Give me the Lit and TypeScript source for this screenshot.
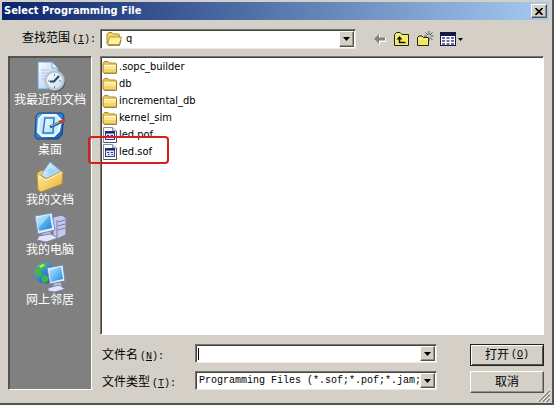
import { LitElement, html, css, svg } from "lit";
import { customElement, state } from "lit/decorators.js";

const folderIcon = html`<svg class="icon16" viewBox="0 0 16 16" aria-hidden="true">
  <path d="M1 4.5 2.5 2.5H6L7.5 4H13.5L14.5 5V13L13.5 14H2L1 13Z" fill="#e8c557" stroke="#b18a2c" />
  <path d="M2 6.5H14V13H2Z" fill="#fbe894" />
  <path d="M2 10H14V13.2H2Z" fill="#f3d56c" />
  <path d="M2 6.5H14" stroke="#fffbd0" />
  <path d="M2 14.5H14.5V6" fill="none" stroke="#8d7331" stroke-width=".8" />
</svg>`;

const openFolderIcon = html`<svg class="icon16" viewBox="0 0 16 16" aria-hidden="true">
  <path d="M1 13V3L2.5 1.5H6L7.5 3H12.5L13.5 4V13Z" fill="#f3d668" stroke="#b18a2c" />
  <path d="M3.5 6H15.5L13.5 13.5H1.5Z" fill="#fff09c" stroke="#b99735" />
  <path d="M2 14.5H13.5L15 9" fill="none" stroke="#897036" stroke-width=".8" />
</svg>`;

const fileIcon = html`<svg class="icon16" viewBox="0 0 16 16" aria-hidden="true">
  <path d="M1.5.5H10.500L14.500 4V15.5H1.5Z" fill="#fff" stroke="#8b8b98" />
  <path d="M10.500.5V4H14.500" fill="#ddd" stroke="#8b8b98" />
  <path d="M14.500 4V15.5H1.5" fill="none" stroke="#55555f" />
  <rect x="3.500" y="4.500" width="9" height="8" fill="#e6ebfb" stroke="#2c3a94" />
  <path d="M3 5.500H13" stroke="#15237f" stroke-width="2" />
  <path d="M5 8.500H7M8.500 8.500H11M6 10.500H7.500M9.500 10.500H11" stroke="#26338a" />
</svg>`;

const defs = (id: string, a: string, b: string) => svg`<linearGradient id=${id} x1="0" y1="0" x2="1" y2="1">
  <stop offset="0" stop-color=${a} /><stop offset="1" stop-color=${b} /></linearGradient>`;

const recentIcon = html`<svg class="icon32" viewBox="0 0 32 32" aria-hidden="true">
  <defs>${defs("page", "#ffffff", "#9cc4ee")}${defs("dial", "#ffffff", "#c6dff2")}</defs>
  <path d="M4 1H18L24 7V28H4Z" fill="url(#page)" stroke="#6d9bd0" />
  <path d="M18 1V7H24Z" fill="#e9f3ff" stroke="#7ea6d4" />
  <path d="M7 9H15M7 12H14M7 15H12M7 18H11" stroke="#accbed" />
  <ellipse cx="21.500" cy="21" rx="10" ry="10" fill="#53606c" />
  <circle cx="20.500" cy="19.500" r="9" fill="url(#dial)" stroke="#b9c6d0" stroke-width="2.500" />
  <path d="M20.500 13V15M20.500 25V27M14 20H16M25 20H27" stroke="#5a87aa" />
  <path d="M25 15 20 20.500H16" fill="none" stroke="#29455e" stroke-width="2" />
</svg>`;

const desktopIcon = html`<svg class="icon32" viewBox="0 0 32 32" aria-hidden="true">
  <defs>${defs("desk", "#57aaf0", "#0c55b5")}${defs("pad", "#ffffff", "#a8d8f9")}</defs>
  <path d="M5 2H28L30 5 28 24 24 28H3L1 25 2 5Z" fill="url(#desk)" stroke="#0a438d" />
  <path d="M9 4H22L27 9 25 20 20 25H8L4 21 5 8Z" fill="#c9e8fc" stroke="#f2fbff" stroke-width="2" />
  <path d="M11 7H20L19 22H9Z" fill="url(#pad)" stroke="#2a7bcc" stroke-width="1.500" />
  <path d="M16 16 26 11.500" stroke="#2b5686" stroke-width="3" />
  <path d="M17 15 26 11" stroke="#7dbbe8" stroke-width="1.200" />
  <path d="M25 11.500 31 9" stroke="#c5402e" stroke-width="3" />
</svg>`;

const documentsIcon = html`<svg class="icon32" viewBox="0 0 32 32" aria-hidden="true">
  <defs>${defs("fold", "#fff3a0", "#e9ae31")}${defs("sheet", "#eaf8ff", "#78b9e8")}</defs>
  <path d="M3 12 8 9 12 12V27L5 30Z" fill="#f5cf58" stroke="#b6862a" />
  <path d="M16 1 28 11 21 24 7 14Z" fill="url(#sheet)" stroke="#7eb0d7" />
  <path d="M13 10 17 7 22 11 19 16Z" fill="#a2d4f4" />
  <path d="M3 13 12 18 29 10 28 23 7 31 4 29Z" fill="url(#fold)" stroke="#bd8b28" />
  <path d="M4 14 12 19 28 11" fill="none" stroke="#fffbd4" />
</svg>`;

const computerIcon = html`<svg class="icon32" viewBox="0 0 32 32" aria-hidden="true">
  <defs>${defs("screen", "#9be0ff", "#167bdc")}</defs>
  <path d="M19 6 28 4 32 7V24L23 28 19 25Z" fill="#c7c8e9" stroke="#7173a7" />
  <path d="M23 9V27M24 11 31 9M24 15 31 13M24 19 31 17" stroke="#7779b2" />
  <path d="M9 20H16L18 26H8Z" fill="#b6b9dc" />
  <path d="M5 25 17 23 24 27 12 31 3 29Z" fill="#e4e5f7" stroke="#8587b7" />
  <path d="M1 5 18 2 21 19 4 23Z" fill="#e4edfb" stroke="#7990bd" />
  <path d="M3 7 16 4 18 17 5 20Z" fill="url(#screen)" />
  <path d="M3 7 16 4 5 16Z" fill="#b9ecff" opacity=".6" />
</svg>`;

const networkIcon = html`<svg class="icon32" viewBox="0 0 32 32" aria-hidden="true">
  <defs>${defs("globe", "#52b7ff", "#094fae")}${defs("screen2", "#b2eaff", "#2289df")}</defs>
  <circle cx="11" cy="12" r="10.500" fill="url(#globe)" />
  <path d="M3 6 9 2 14 3 11 7 7 10 8 15 4 16 1 11ZM10 14 15 16 13 21 9 22 7 17Z" fill="#42b741" />
  <path d="M5 5 9 3 11 4 7 7Z" fill="#b1ed84" />
  <path d="M20 22H27L28 27H19Z" fill="#babfe3" />
  <path d="M14 27 25 24 31 28 21 31 14 30Z" fill="#e3e5f7" stroke="#7f83b4" />
  <path d="M13 7 29 4 31 20 16 23Z" fill="#e7effb" stroke="#7087b5" />
  <path d="M15 9 27 6 29 18 17 21Z" fill="url(#screen2)" />
</svg>`;

const places = [
  { label: "我最近的文档", icon: recentIcon },
  { label: "桌面", icon: desktopIcon },
  { label: "我的文档", icon: documentsIcon },
  { label: "我的电脑", icon: computerIcon },
  { label: "网上邻居", icon: networkIcon },
];

const files = [
  { name: ".sopc_builder", icon: folderIcon },
  { name: "db", icon: folderIcon },
  { name: "incremental_db", icon: folderIcon },
  { name: "kernel_sim", icon: folderIcon },
  { name: "led.pof", icon: fileIcon },
  { name: "led.sof", icon: fileIcon, marked: true },
];

const arrow = html`<svg class="arrow" viewBox="0 0 7 4" aria-hidden="true"><path d="M0 0H7L3.500 4Z" /></svg>`;

@customElement("app-root")
export class AppRoot extends LitElement {
  @state() private fileName = "";

  static styles = css`
    :host {
      display: block;
      font: 12px/16px "Liberation Sans", "Noto Sans CJK SC", sans-serif;
      color: #000;
    }
    * { box-sizing: border-box; }
    button, input, select { font: inherit; color: inherit; margin: 0; border-radius: 0; }
    button { padding: 0; }
    .window {
      min-height: 100vh;
      display: flex;
      flex-direction: column;
      background: #d4d0c8;
      padding: 2px 3px 10px 2px;
      border-right: 2px solid #55534f;
      border-bottom: 2px solid #55534f;
      position: relative;
    }
    .title {
      display: flex;
      align-items: center;
      justify-content: space-between;
      height: 18px;
      padding: 0 2px;
      background: linear-gradient(90deg, #0a246a, #a6caf0);
    }
    h1 {
      margin: 0;
      font: bold 11px/18px "DejaVu Sans Condensed", "Noto Sans", sans-serif;
      color: #fff;
    }
    .raised {
      background: #d4d0c8;
      border: 1px solid;
      border-color: #fff #55534f #55534f #fff;
      box-shadow: inset -1px -1px #96938c;
      display: flex;
      align-items: center;
      justify-content: center;
    }
    .close { width: 16px; height: 14px; }
    .close svg { width: 8px; height: 7px; }
    .look {
      display: grid;
      grid-template-columns: 92px 1fr 188px;
      align-items: center;
      padding: 9px 5px 0 6px;
    }
    .look label { padding-left: 14px; }
    .mono { font-family: "Liberation Mono", monospace; font-size: 10px; }
    .key { margin-left: 2px; }
    .combo {
      display: flex;
      position: relative;
      height: 19px;
      min-width: 0;
      background: #fff;
      border: 1px solid;
      border-color: #77756f #eceae5 #eceae5 #77756f;
      box-shadow: inset 1px 1px #45443f;
      padding: 1px 1px 1px 2px;
    }
    .look .combo { height: 20px; }
    .combo select, .combo input {
      flex: 1;
      min-width: 0;
      width: 0;
      appearance: none;
      background: transparent;
      border: 0;
      outline: 0;
      padding: 0 0 0 1px;
    }
    .combo input:placeholder-shown {
      caret-color: transparent;
      background: linear-gradient(#000, #000) 0 2px / 1px 12px no-repeat;
    }
    .combo .drop { width: 15px; flex: none; pointer-events: none; }
    .combo .icon16 { margin: 0 3px; align-self: center; }
    .arrow { width: 7px; height: 4px; }
    .latin { font-family: "DejaVu Sans Condensed", "Noto Sans", sans-serif; font-size: 11px; }
    .tools { display: flex; align-items: center; gap: 6px; padding-left: 16px; }
    .tools button { height: 20px; background: none; border: 0; display: flex; align-items: center; }
    .tools svg { display: block; }
    .body {
      flex: 1;
      display: grid;
      grid-template-columns: 84px 1fr;
      gap: 8px;
      padding: 7px 5px 0 6px;
    }
    .places {
      background: #808080;
      border: 1px solid;
      border-color: #55534f #fff #fff #55534f;
      box-shadow: inset 1px 1px #55534f;
      margin-bottom: 3px;
      padding-top: 4px;
    }
    .place {
      width: 100%;
      height: 50px;
      display: flex;
      flex-direction: column;
      align-items: center;
      background: none;
      border: 0;
      color: #fff;
      line-height: 14px;
      white-space: nowrap;
    }
    .icon32 { width: 32px; height: 32px; flex: none; }
    .icon16 { width: 16px; height: 16px; flex: none; }
    .main { display: flex; flex-direction: column; min-width: 0; }
    .files {
      flex: 1;
      margin: 0;
      padding: 1px;
      list-style: none;
      background: #fff;
      border: 1px solid;
      border-color: #77756f #fff #fff #77756f;
      box-shadow: inset 1px 1px #45443f;
    }
    .file { position: relative; height: 17px; }
    .file button {
      display: flex;
      align-items: center;
      gap: 1px;
      height: 17px;
      background: none;
      border: 0;
    }
    .mark {
      position: absolute;
      inset: -7px auto -4px -14px;
      width: 81px;
      border: 2px solid #d0201f;
      border-radius: 4px;
      pointer-events: none;
    }
    .fields {
      display: grid;
      grid-template-columns: 95px 1fr 74px;
      grid-template-rows: 22px 22px;
      row-gap: 5px;
      padding-top: 9px;
    }
    .fields label { padding: 3px 0 0 2px; }
    .fields .combo { margin-right: 33px; }
    .default { border-color: #222; box-shadow: inset 1px 1px #fff, inset -1px -1px #55534f; }
    .grip { position: absolute; right: 2px; bottom: 1px; width: 13px; height: 13px; }
  `;

  render() {
    return html`<main class="window">
      <header class="title">
        <h1>Select Programming File</h1>
        <button class="raised close" aria-label="Close">
          <svg viewBox="0 0 8 7"><path d="M.5 0 7.500 7M7.500 0 .5 7" stroke="#000" stroke-width="1.700" /></svg>
        </button>
      </header>
      <div class="look">
        <label for="folder">查找范围<span class="mono key">(<u>I</u>):</span></label>
        <div class="combo latin">
          ${openFolderIcon}
          <select id="folder"><option>q</option></select>
          <span class="raised drop">${arrow}</span>
        </div>
        <nav class="tools">
          <button aria-label="Back"><svg width="16" height="16" viewBox="0 0 16 16">
            <path d="M8 4V7H14V11H8V14L2 9Z" fill="#fff" />
            <path d="M7 3V6.500H13V9.500H7V13L2 8Z" fill="#85827d" />
          </svg></button>
          <button aria-label="Up one level"><svg width="16" height="16" viewBox="0 0 16 16">
            <path d="M.5 14.500V3.500L2.500 1.500H6L8 3.500H14.500V14.500Z" fill="#f7ed62" stroke="#222" />
            <path d="M11.500 11.500H5.500V7" fill="none" stroke="#111" stroke-width="1.500" />
            <path d="M2.500 8.500 5.500 5 8.500 8.500Z" fill="#111" />
          </svg></button>
          <button aria-label="New folder"><svg width="18" height="16" viewBox="0 0 18 16">
            <path d="M1.500 14.500V6.500L3 5H6L7.500 6.500H12.500V14.500Z" fill="#f3e958" stroke="#222" />
            <path d="M2 8H12" stroke="#fffbb0" />
            <path d="M13 0V4M13 7V10M8 5H11M14.500 5H17.500M9.500 1.500 12 4M16.500 1.500 14 4M14 6.500 16.500 9" stroke="#55534f" />
          </svg></button>
          <button aria-label="View menu"><svg width="24" height="16" viewBox="0 0 24 16">
            <rect x=".5" y="1.500" width="15" height="13" fill="#fff" stroke="#17173a" />
            <rect y="1" width="16" height="4" fill="#121848" />
            <path d="M2 7H5M6.500 7H9.500M11 7H14M2 10H5M6.500 10H9.500M11 10H14M2 13H5M6.500 13H9.500M11 13H14" stroke="#3b3f7c" stroke-width="1.500" />
            <path d="M18 7H23L20.500 10Z" fill="#000" />
          </svg></button>
        </nav>
      </div>
      <div class="body">
        <nav class="places">
          ${places.map((p) => html`<button class="place">${p.icon}<span>${p.label}</span></button>`)}
        </nav>
        <section class="main">
          <ul class="files latin">
            ${files.map((f) => html`<li class="file">
              <button @click=${() => (this.fileName = f.name)}>${f.icon}<span>${f.name}</span></button>
              ${f.marked ? html`<span class="mark"></span>` : ""}
            </li>`)}
          </ul>
          <form class="fields" @submit=${(e: Event) => e.preventDefault()}>
            <label for="name">文件名<span class="mono key">(<u>N</u>):</span></label>
            <div class="combo">
              <input id="name" placeholder=" " .value=${this.fileName} />
              <button type="button" class="raised drop" aria-label="Recent names">${arrow}</button>
            </div>
            <button class="raised default">打开<span class="mono key">(<u>O</u>)</span></button>
            <label for="type">文件类型<span class="mono key">(<u>T</u>):</span></label>
            <div class="combo mono">
              <select id="type"><option>Programming Files (*.sof;*.pof;*.jam;*.jbc)</option></select>
              <span class="raised drop">${arrow}</span>
            </div>
            <button type="button" class="raised">取消</button>
          </form>
        </section>
      </div>
      <svg class="grip" viewBox="0 0 13 13" aria-hidden="true">
        <path d="M0 13 13 0M4 13 13 4M8 13 13 8" stroke="#fff" />
        <path d="M1.500 13 13 1.500M5.500 13 13 5.500M9.500 13 13 9.500" stroke="#85827d" stroke-width="1.300" />
      </svg>
    </main>`;
  }
}
